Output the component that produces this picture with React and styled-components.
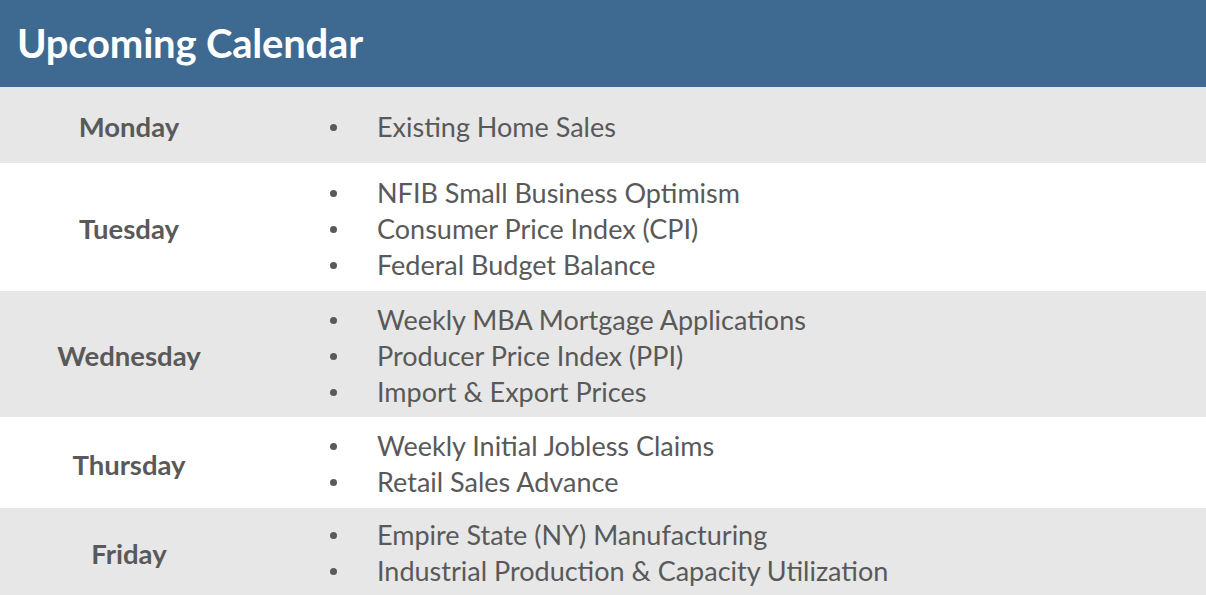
import React from "react";
import styled, { createGlobalStyle } from "styled-components";

const GlobalStyle = createGlobalStyle`
  html, body {
    margin: 0;
    padding: 0;
    background: #ffffff;
  }
  body {
    font-family: "Lato", "Liberation Sans", sans-serif;
  }
`;

const Wrapper = styled.div`
  width: 1206px;
  height: 595px;
  overflow: hidden;
`;

const Header = styled.header`
  height: 87px;
  background: #3e6a91;
  display: flex;
  align-items: center;
  padding-left: 17px;
  box-sizing: border-box;
`;

const Title = styled.h1`
  margin: 0;
  color: #ffffff;
  font-size: 40px;
  font-weight: 700;
  letter-spacing: -0.2px;
  padding-bottom: 2px;
`;

const Row = styled.div`
  display: grid;
  grid-template-columns: 258px 1fr;
  align-items: center;
  height: ${(p) => p.h}px;
  background: ${(p) => (p.shaded ? "#e7e7e7" : "#ffffff")};
`;

const Day = styled.div`
  text-align: center;
  color: #595959;
  font-weight: 700;
  font-size: 27.5px;
  padding-top: 3px;
`;

const Items = styled.ul`
  list-style: none;
  margin: 0;
  padding: 3px 0 0 66px;
`;

const Item = styled.li`
  position: relative;
  padding-left: 53px;
  height: 36px;
  line-height: 36px;
  color: #595959;
  font-size: 27px;

  &::before {
    content: "";
    position: absolute;
    left: 6px;
    top: 15px;
    width: 7px;
    height: 7px;
    border-radius: 50%;
    background: #595959;
  }
`;

const schedule = [
  { day: "Monday", h: 76, items: ["Existing Home Sales"] },
  {
    day: "Tuesday",
    h: 128,
    items: [
      "NFIB Small Business Optimism",
      "Consumer Price Index (CPI)",
      "Federal Budget Balance",
    ],
  },
  {
    day: "Wednesday",
    h: 126,
    items: [
      "Weekly MBA Mortgage Applications",
      "Producer Price Index (PPI)",
      "Import & Export Prices",
    ],
  },
  {
    day: "Thursday",
    h: 91,
    items: ["Weekly Initial Jobless Claims", "Retail Sales Advance"],
  },
  {
    day: "Friday",
    h: 87,
    items: [
      "Empire State (NY) Manufacturing",
      "Industrial Production & Capacity Utilization",
    ],
  },
];

const App = () => {
  return (
    <Wrapper>
      <GlobalStyle />
      <Header>
        <Title>Upcoming Calendar</Title>
      </Header>
      {schedule.map((row, i) => (
        <Row key={row.day} h={row.h} shaded={i % 2 === 0}>
          <Day>{row.day}</Day>
          <Items>
            {row.items.map((item) => (
              <Item key={item}>{item}</Item>
            ))}
          </Items>
        </Row>
      ))}
    </Wrapper>
  );
};

export default App;
